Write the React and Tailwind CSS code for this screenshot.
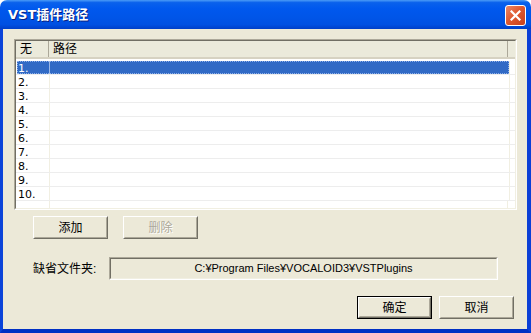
import React from "react";

const ROWS = ["1.", "2.", "3.", "4.", "5.", "6.", "7.", "8.", "9.", "10."];

const font = "font-['Tahoma','DejaVu_Sans','Noto_Sans_CJK_SC',sans-serif]";
const cjk = "font-['Liberation_Sans','Noto_Sans_CJK_SC',sans-serif]";

function ClassicButton({ children, disabled, primary, className = "" }) {
  // classic 3D button, optional black frame for the default button
  const inner = (
    <div className="h-full w-full border border-t-white border-l-white border-r-[#716f64] border-b-[#716f64]">
      <div className="flex h-full w-full items-center justify-center border border-t-[#ece9d8] border-l-[#ece9d8] border-r-[#aca899] border-b-[#aca899]">
        <span
          className={`${cjk} text-[12px] leading-none ${
            disabled ? "text-[#aca899] [text-shadow:1px_1px_0_#fff]" : "text-black"
          }`}
        >
          {children}
        </span>
      </div>
    </div>
  );
  return (
    <div
      className={`h-[23px] w-[75px] bg-[#ece9d8] ${
        primary ? "border border-black" : ""
      } ${className}`}
    >
      {inner}
    </div>
  );
}

export default function App() {
  return (
    <div className="h-[333px] w-[531px] overflow-hidden bg-white">
      <div className="flex h-full w-full flex-col overflow-hidden rounded-t-[7px]">
        {/* Title bar */}
        <div className="flex h-[29px] shrink-0 items-center justify-between bg-[linear-gradient(to_bottom,#4b9cf7_0%,#0a61ec_9%,#0058ee_30%,#0055e8_60%,#0050e2_85%,#003fc8_100%)] pl-[8px] pr-[5px]">
          <span
            className={`${font} text-[13px] font-bold text-white [text-shadow:1px_1px_0_#0a1f80]`}
          >
            VST插件路径
          </span>
          <div className="mt-[2px] flex h-[21px] w-[21px] items-center justify-center rounded-[3px] border border-white bg-[linear-gradient(135deg,#e9896b_0%,#e05a31_45%,#c9401c_100%)]">
            <svg width="11" height="11" viewBox="0 0 11 11">
              <path
                d="M1.5 1.5 L9.5 9.5 M9.5 1.5 L1.5 9.5"
                stroke="white"
                strokeWidth="2.2"
                strokeLinecap="square"
              />
            </svg>
          </div>
        </div>

        {/* Body with frame */}
        <div className="flex min-h-0 flex-1 border-b-[4px] border-l-[3px] border-r-[4px] border-b-[#0030c4] border-l-[#0b44d9] border-r-[#0b3fd6]">
          <div className={`flex flex-1 flex-col bg-[#ece9d8] pl-[11px] pt-[10px] ${font}`}>
            {/* List view */}
            <div className="h-[171px] w-[503px] border border-t-[#aca899] border-l-[#aca899] border-r-white border-b-white">
              <div className="flex h-full w-full flex-col border border-t-[#716f64] border-l-[#716f64] border-r-[#f1efe2] border-b-[#f1efe2] bg-white">
                {/* header */}
                <div className="flex h-[18px] shrink-0 border-b-2 border-b-[#d6d2c2] bg-[#ebeadb] text-[12px] text-black">
                  <div className={`${cjk} flex w-[33px] items-center border-r border-r-[#aca899] pl-[4px] leading-none`}>
                    无
                  </div>
                  <div className={`${cjk} flex w-[459px] items-center border-r border-r-[#aca899] pl-[4px] leading-none`}>
                    路径
                  </div>
                  <div className="flex-1" />
                </div>
                {/* rows */}
                <div className="flex flex-1 flex-col pt-[2px]">
                  {ROWS.map((r, i) => (
                    <div key={r} className="flex h-[14px] border-b border-b-[#ededed]">
                      <div
                        className={`flex w-[492px] items-center ${
                          i === 0
                            ? "ml-[1px] bg-[#316ac5] text-white outline outline-1 -outline-offset-1 outline-dotted outline-[#8fb0e8]"
                            : "ml-[1px] text-black"
                        }`}
                      >
                        <div className="w-[32px] pl-[1px] pt-[2px] text-[11px] leading-none">{r}</div>
                        <div className={`h-full flex-1 ${i === 0 ? "border-l border-l-[#9cb8e6]" : "border-l border-l-[#f1efe2]"}`} />
                      </div>
                      <div className="flex-1 border-l border-l-[#f1efe2]" />
                    </div>
                  ))}
                  <div className="flex flex-1">
                    <div className="ml-[33px] w-[459px] border-l border-r border-l-[#f1efe2] border-r-[#f1efe2]" />
                  </div>
                </div>
              </div>
            </div>

            {/* Add / delete */}
            <div className="mt-[6px] flex gap-[15px] pl-[19px]">
              <ClassicButton>添加</ClassicButton>
              <ClassicButton disabled>删除</ClassicButton>
            </div>

            {/* Default folder */}
            <div className="mt-[18px] flex items-center pl-[19px]">
              <span className={`${cjk} w-[76px] text-[12px] text-black`}>缺省文件夹:</span>
              <div className="h-[23px] w-[389px] border border-t-[#aca899] border-l-[#aca899] border-r-white border-b-white">
                <div className="flex h-full w-full items-center justify-center border border-t-[#716f64] border-l-[#716f64] border-r-[#f1efe2] border-b-[#f1efe2] font-['Liberation_Sans',sans-serif] text-[11px] text-black">
                  C:¥Program Files¥VOCALOID3¥VSTPlugins
                </div>
              </div>
            </div>

            {/* OK / Cancel */}
            <div className="mt-[16px] flex gap-[7px] pl-[343px]">
              <ClassicButton primary>确定</ClassicButton>
              <ClassicButton>取消</ClassicButton>
            </div>
          </div>
        </div>
      </div>
    </div>
  );
}
